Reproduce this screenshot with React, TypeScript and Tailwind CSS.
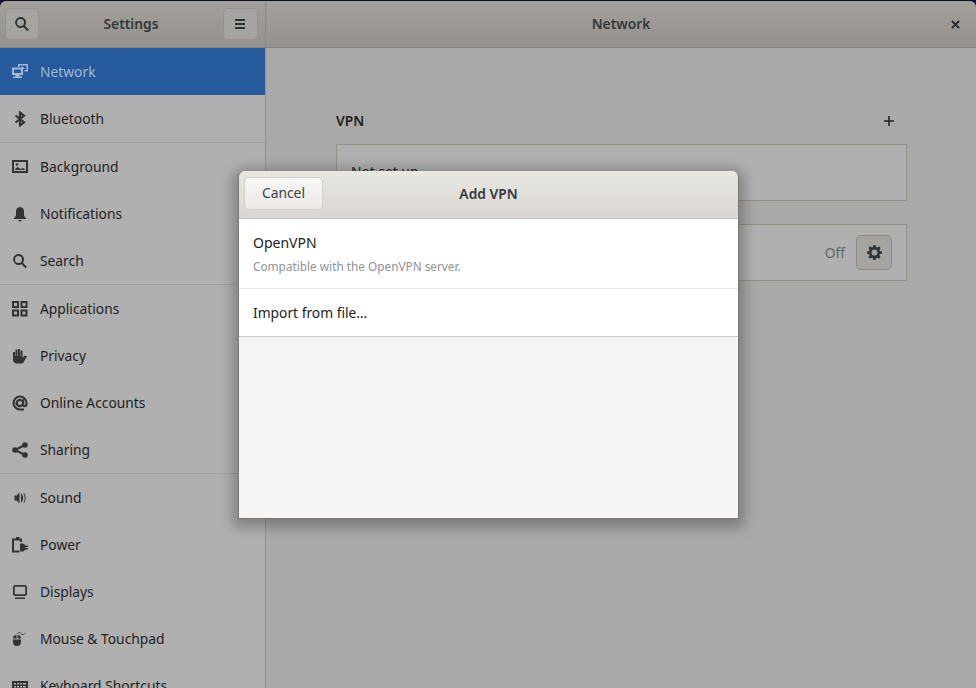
import type { ReactNode } from "react";

const ic = "w-4 h-4 shrink-0";

function Svg({ children, className = "text-[#333333]" }: { children: ReactNode; className?: string }) {
  return (
    <svg viewBox="0 0 16 16" fill="currentColor" className={`${ic} ${className}`}>
      {children}
    </svg>
  );
}

const icons: Record<string, ReactNode> = {
  network: (
    <>
      <path fillRule="evenodd" d="M6 0h10v7.500h-3.500V6H14.500V1.500h-7V3H6z" />
      <path d="M10 2.500l3 1.700-3 1.700z" />
      <path fillRule="evenodd" d="M0 3.500h11V11H7.500v1.500H10V14H1v-1.500h2.500V11H0zM2 5.500V9h7V5.500z" />
    </>
  ),
  bluetooth: <path d="M3.500 4.500L12 11.200 8 14.500v-13l4 3.300L3.500 11.500" fill="none" stroke="currentColor" strokeWidth="2.200" />,
  background: (
    <>
      <path fillRule="evenodd" d="M0 1h16v13H0zm2 2v9h12V3z" />
      <path d="M3 11v-1l2.500-2 3 2 2.500-1 2 1.500v.5z" />
      <circle cx="5" cy="5.500" r="1.300" />
    </>
  ),
  bell: (
    <>
      <path d="M8 1c2.800 0 4 2.200 4 4.500V9c0 1 .8 2 2 3v1H2v-1c1.200-1 2-2 2-3V5.500C4 3.200 5.200 1 8 1z" />
      <path d="M6.500 14h3a1.500 1.500 0 0 1-3 0z" />
    </>
  ),
  search: (
    <path
      fillRule="evenodd"
      d="M6.500 1a5.500 5.500 0 0 1 4.400 8.800l4 4-1.400 1.400-4-4A5.500 5.500 0 1 1 6.500 1zm0 2a3.500 3.500 0 1 0 0 7 3.500 3.500 0 0 0 0-7z"
    />
  ),
  apps: (
    <path
      fillRule="evenodd"
      d="M0 0h7v7H0zm2 2v3h3V2zM8.500 0h7v7h-7zm2 2v3h3V2zM0 8.500h7v7H0zm2 2v3h3v-3zM8.500 8.500h7v7h-7zm2 2v3h3v-3z"
    />
  ),
  hand: (
    <path d="M1 4h2v4h.5V1.500h2V8H6V1h2v7h.5V2.500h2V10l2-2.500 2.500.7-3.300 5.800c-.6 1-1.500 1.500-2.700 1.500H5c-2.500 0-4-1.500-4-4z" />
  ),
  at: (
    <path
      fillRule="evenodd"
      d="M8 .5A7.500 7.500 0 0 1 15.500 8v1.500c0 1.700-1.200 2.800-2.800 2.800-.9 0-1.700-.4-2.200-1A4.200 4.200 0 1 1 10 4.500v-.3h2.200v5.200c0 .4.200.7.600.7s.6-.3.600-.8V8A5.400 5.400 0 1 0 8 13.400h4v2.100H8A7.500 7.500 0 0 1 8 .5zm0 5.400a2.100 2.100 0 1 0 0 4.200 2.100 2.100 0 0 0 0-4.200z"
    />
  ),
  share: (
    <>
      <circle cx="13" cy="3" r="2.800" />
      <circle cx="3" cy="8" r="2.800" />
      <circle cx="13" cy="13" r="2.800" />
      <path d="M3 8l10-5M3 8l10 5" stroke="currentColor" strokeWidth="2" fill="none" />
    </>
  ),
  sound: (
    <>
      <path d="M2.500 5.500h2L7.500 2.500v11l-3-3h-2z" />
      <path d="M9 3.500c1.500 1 2.200 2.700 2.200 4.500S10.500 11.500 9 12.500zM12 3c1 1.300 1.700 3.200 1.700 5s-.7 3.700-1.700 5l-.6-.4c.9-1.300 1.300-3 1.300-4.600s-.4-3.300-1.300-4.600z" />
    </>
  ),
  power: (
    <>
      <path fillRule="evenodd" d="M4 0h3.500v1.500H10V5H8V3.500H2v10h5.500V15.500H0V1.500h4z" />
      <path d="M8 6.500h2.500a3 3 0 0 1 2.800 2H16V10h-2.500v1H16v1.500h-2.700a3 3 0 0 1-2.800 2H8z" />
    </>
  ),
  display: (
    <>
      <path
        fillRule="evenodd"
        d="M3.500 1h9A2.500 2.500 0 0 1 15 3.500v6a2.500 2.500 0 0 1-2.500 2.500h-9A2.500 2.500 0 0 1 1 9.500v-6A2.500 2.500 0 0 1 3.500 1zm0 1.700a.8.800 0 0 0-.8.800v6a.8.800 0 0 0 .8.800h9a.8.800 0 0 0 .8-.8v-6a.8.800 0 0 0-.8-.8z"
      />
      <path d="M3 13.500h10V15H3z" />
    </>
  ),
  mouse: (
    <>
      <path d="M1 8.500h8V11a4 4 0 0 1-8 0zM1 7.500C1 5.500 2 4 4.500 4v3.500zM5.500 4C8 4 9 5.500 9 7.500H5.500z" />
      <path d="M5.500 3c1-2 2-2 3.300-.5s2.700 1.500 4.700-.5" fill="none" stroke="currentColor" strokeWidth="0.800" />
    </>
  ),
  keyboard: (
    <path
      fillRule="evenodd"
      d="M0 3h16v10H0zm2 2v1.500h2V5zm3 0v1.500h2V5zm3 0v1.500h2V5zm3 0v1.500h3V5zM2 8v1.500h2V8zm3 0v1.500h2V8zm3 0v1.500h2V8zm3 0v1.500h3V8z"
    />
  ),
};

function Row({ icon, label, active }: { icon: string; label: string; active?: boolean }) {
  return (
    <div
      className={`h-[47px] shrink-0 flex items-center pl-3 gap-3 text-[13.8px] ${
        active ? "bg-[#255a9c] text-[#a3b8d2]" : "text-[#222222]"
      }`}
    >
      <Svg className={active ? "text-[#a3b8d2]" : "text-[#333333]"}>{icons[icon]}</Svg>
      <span className="pt-[2px]">{label}</span>
    </div>
  );
}

function Sep() {
  return <div className="h-px shrink-0 bg-[#a0a09e]" />;
}

function Panel({ className, children }: { className: string; children?: ReactNode }) {
  return (
    <div className={`w-[571px] border border-[#93908a] bg-[#b0b0b0] flex items-center ${className}`}>{children}</div>
  );
}

export default function App() {
  return (
    <div
      className="relative w-[976px] h-[688px] overflow-hidden bg-[#0c0c2c] pt-px"
      style={{ fontFamily: '"Noto Sans", sans-serif' }}
    >
      <div className="h-[687px] flex flex-col rounded-t-[6px] overflow-hidden">
        {/* headerbar */}
        <header className="h-[47px] shrink-0 flex bg-gradient-to-b from-[#a3a09c] to-[#95928d] border-b border-[#85827c] text-[#2e3436]">
          <div className="w-[266px] shrink-0 border-r border-[#8b8883] flex items-center justify-between px-[5px]">
            <button className="w-[34px] h-8 flex items-center justify-center rounded-[5px] bg-[#a6a4a0] border border-[#97948f]">
              <Svg className="text-[#2e3436]">{icons.search}</Svg>
            </button>
            <span className="text-[13.8px] font-semibold text-[#33383a]">Settings</span>
            <button className="w-[35px] h-8 flex items-center justify-center rounded-[5px] bg-[#a6a4a0] border border-[#97948f] mr-[2px]">
              <span className="flex flex-col gap-[2px]">
                <span className="block w-[10px] h-[2px] bg-[#2e3436]" />
                <span className="block w-[10px] h-[2px] bg-[#2e3436]" />
                <span className="block w-[10px] h-[2px] bg-[#2e3436]" />
              </span>
            </button>
          </div>
          <div className="flex-1 flex items-center pl-[25px] pr-[16px]">
            <span className="flex-1 text-center text-[13.8px] font-semibold text-[#33383a]">Network</span>
            <svg viewBox="0 0 10 10" className="w-[9px] h-[9px] text-[#26292b]" stroke="currentColor" strokeWidth="2.200">
              <path d="M1 1l8 8M9 1l-8 8" />
            </svg>
          </div>
        </header>

        <div className="flex-1 flex min-h-0">
          <aside className="w-[266px] shrink-0 border-r border-[#92918e] bg-[#b0b0b0] flex flex-col">
            <Row icon="network" label="Network" active />
            <Row icon="bluetooth" label="Bluetooth" />
            <Sep />
            <Row icon="background" label="Background" />
            <Row icon="bell" label="Notifications" />
            <Row icon="search" label="Search" />
            <Sep />
            <Row icon="apps" label="Applications" />
            <Row icon="hand" label="Privacy" />
            <Row icon="at" label="Online Accounts" />
            <Row icon="share" label="Sharing" />
            <Sep />
            <Row icon="sound" label="Sound" />
            <Row icon="power" label="Power" />
            <Row icon="display" label="Displays" />
            <Row icon="mouse" label="Mouse & Touchpad" />
            <Row icon="keyboard" label="Keyboard Shortcuts" />
          </aside>

          <main className="flex-1 bg-[#a9a9a7] pl-[70px] pt-[61px]">
            <div className="w-[571px] h-[24px] flex items-center justify-between pr-[13px] mb-[11px]">
              <span className="text-[13.8px] font-semibold text-[#222222]">VPN</span>
              <svg viewBox="0 0 10 10" className="w-[10px] h-[10px] text-[#222222]" stroke="currentColor" strokeWidth="1.600">
                <path d="M5 0v10M0 5h10" />
              </svg>
            </div>
            <Panel className="h-[57px] pl-[14px] text-[13.8px] text-[#222222]">
              <span>Not set up</span>
            </Panel>
            <Panel className="h-[57px] mt-[23px] justify-end pr-[14px] gap-[11px] text-[13.8px] text-[#666666]">
              <span className="pt-[2px]">Off</span>
              <button className="w-[36px] h-[35px] flex items-center justify-center rounded-[5px] border border-[#8c8a86] bg-[#a6a4a1]">
                <svg viewBox="0 0 16 16" className="w-[15px] h-[15px] text-[#2e3436]" fill="currentColor">
                  <path
                    fillRule="evenodd"
                    d="M6.800 0h2.400l.4 2.200 1.200.5L12.600 1.400l1.900 1.900-1.300 1.800.5 1.200 2.300.5v2.400l-2.300.5-.5 1.200 1.300 1.800-1.900 1.900-1.800-1.300-1.200.5-.4 2.100H6.800l-.4-2.100-1.200-.5-1.800 1.300-1.900-1.900 1.300-1.800-.5-1.200L0 9.200V6.800l2.300-.5.5-1.200L1.500 3.300l1.900-1.900 1.800 1.300 1.200-.5zM8 4.800a3.200 3.200 0 1 0 0 6.400 3.200 3.200 0 0 0 0-6.400z"
                  />
                </svg>
              </button>
            </Panel>
          </main>
        </div>
      </div>

      {/* Add VPN dialog */}
      <div className="absolute left-[238px] top-[171px] w-[501px] h-[348px] flex flex-col rounded-t-[7px] overflow-hidden bg-[#f6f5f4] border-x border-b border-[#7b7975] shadow-[0_3px_14px_5px_rgba(0,0,0,0.28)]">
        <div className="h-[48px] shrink-0 relative flex items-center justify-center bg-gradient-to-b from-[#e9e7e3] to-[#dad7d2] border-b border-[#c8c4bc]">
          <button className="absolute left-[5px] top-[6px] w-[79px] h-[33px] rounded-[5px] border border-[#d2cfc9] bg-gradient-to-b from-[#f8f7f6] to-[#ece9e6] text-[13.8px] text-[#3d4244]">
            Cancel
          </button>
          <span className="text-[13.8px] font-semibold text-[#33383a]">Add VPN</span>
        </div>
        <div className="bg-white border-b border-[#cdc7c2] text-[#222222]">
          <div className="h-[70px] px-[14px] border-b border-[#e8e6e3] flex flex-col pt-[14px]">
            <span className="text-[14px] leading-[20px]">OpenVPN</span>
            <span className="text-[11.8px] leading-[16px] mt-[5px] text-[#8f9193]">Compatible with the OpenVPN server.</span>
          </div>
          <div className="h-[47px] px-[14px] pt-[1px] flex items-center text-[13.8px]">Import from file…</div>
        </div>
      </div>
    </div>
  );
}
